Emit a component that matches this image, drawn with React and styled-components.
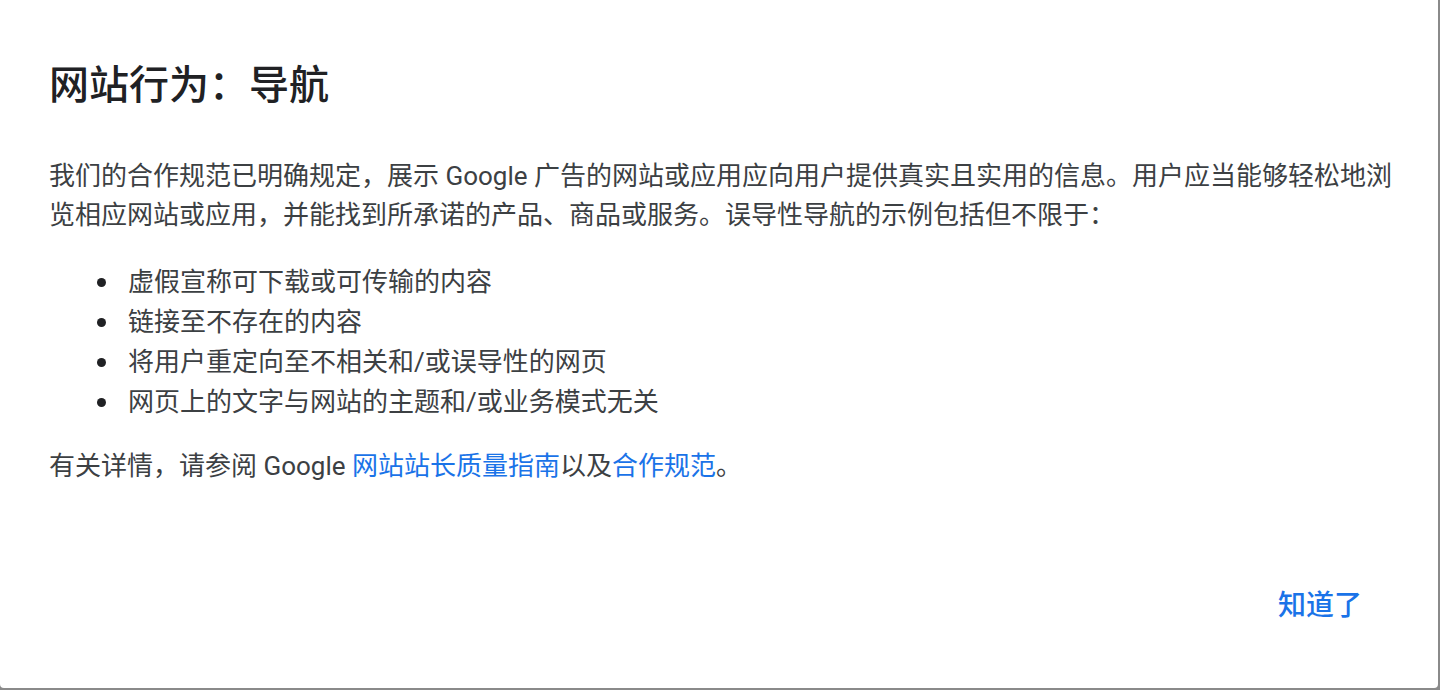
import React from "react";
import styled, { createGlobalStyle } from "styled-components";

const GlobalStyle = createGlobalStyle`
  html, body {
    margin: 0;
    padding: 0;
    background-color: #8a8a8a;
  }
  body {
    font-family: Roboto, "Noto Sans CJK SC", sans-serif;
  }
`;

const Dialog = styled.div`
  width: 1438px;
  height: 688px;
  box-sizing: border-box;
  background-color: #ffffff;
  border-radius: 0 0 4px 4px;
  padding: 62px 40px 57px 49px;
  display: flex;
  flex-direction: column;
`;

const Title = styled.h1`
  margin: 0;
  font-size: 40px;
  line-height: 48px;
  font-weight: 500;
  color: #202124;
`;

const Paragraph = styled.p`
  margin: ${(props) => (props.top ? props.top : "0")}px 0 0 0;
  font-size: 26px;
  line-height: 39px;
  color: #3c4043;
`;

const List = styled.ul`
  list-style: none;
  margin: 27px 0 0 0;
  padding: 0;
`;

const Item = styled.li`
  display: flex;
  align-items: center;
  font-size: 26px;
  line-height: 40px;
  color: #3c4043;
`;

const Dot = styled.span`
  width: 9px;
  height: 9px;
  border-radius: 50%;
  background-color: #202124;
  margin-left: 48px;
  margin-right: 22px;
  flex-shrink: 0;
`;

const Link = styled.a`
  color: #1a73e8;
  text-decoration: none;
  cursor: pointer;
`;

const Footer = styled.div`
  margin-top: auto;
  display: flex;
  justify-content: flex-end;
  padding-right: 20px;
`;

const TextButton = styled.button`
  height: 56px;
  padding: 0 16px;
  border: none;
  background: transparent;
  font-family: Roboto, "Noto Sans CJK SC", sans-serif;
  font-size: 28px;
  font-weight: 500;
  color: #1a73e8;
  cursor: pointer;
`;

const items = [
  "虚假宣称可下载或可传输的内容",
  "链接至不存在的内容",
  "将用户重定向至不相关和/或误导性的网页",
  "网页上的文字与网站的主题和/或业务模式无关",
];

const App = () => {
  return (
    <>
      <GlobalStyle />
      <Dialog>
        <Title>网站行为：导航</Title>
        <Paragraph top={47}>
          我们的合作规范已明确规定，展示 Google
          广告的网站或应用应向用户提供真实且实用的信息。用户应当能够轻松地浏览相应网站或应用，并能找到所承诺的产品、商品或服务。误导性导航的示例包括但不限于：
        </Paragraph>
        <List>
          {items.map((text) => (
            <Item key={text}>
              <Dot />
              {text}
            </Item>
          ))}
        </List>
        <Paragraph top={25}>
          有关详情，请参阅 Google <Link>网站站长质量指南</Link>以及
          <Link>合作规范</Link>。
        </Paragraph>
        <Footer>
          <TextButton>知道了</TextButton>
        </Footer>
      </Dialog>
    </>
  );
};

export default App;
